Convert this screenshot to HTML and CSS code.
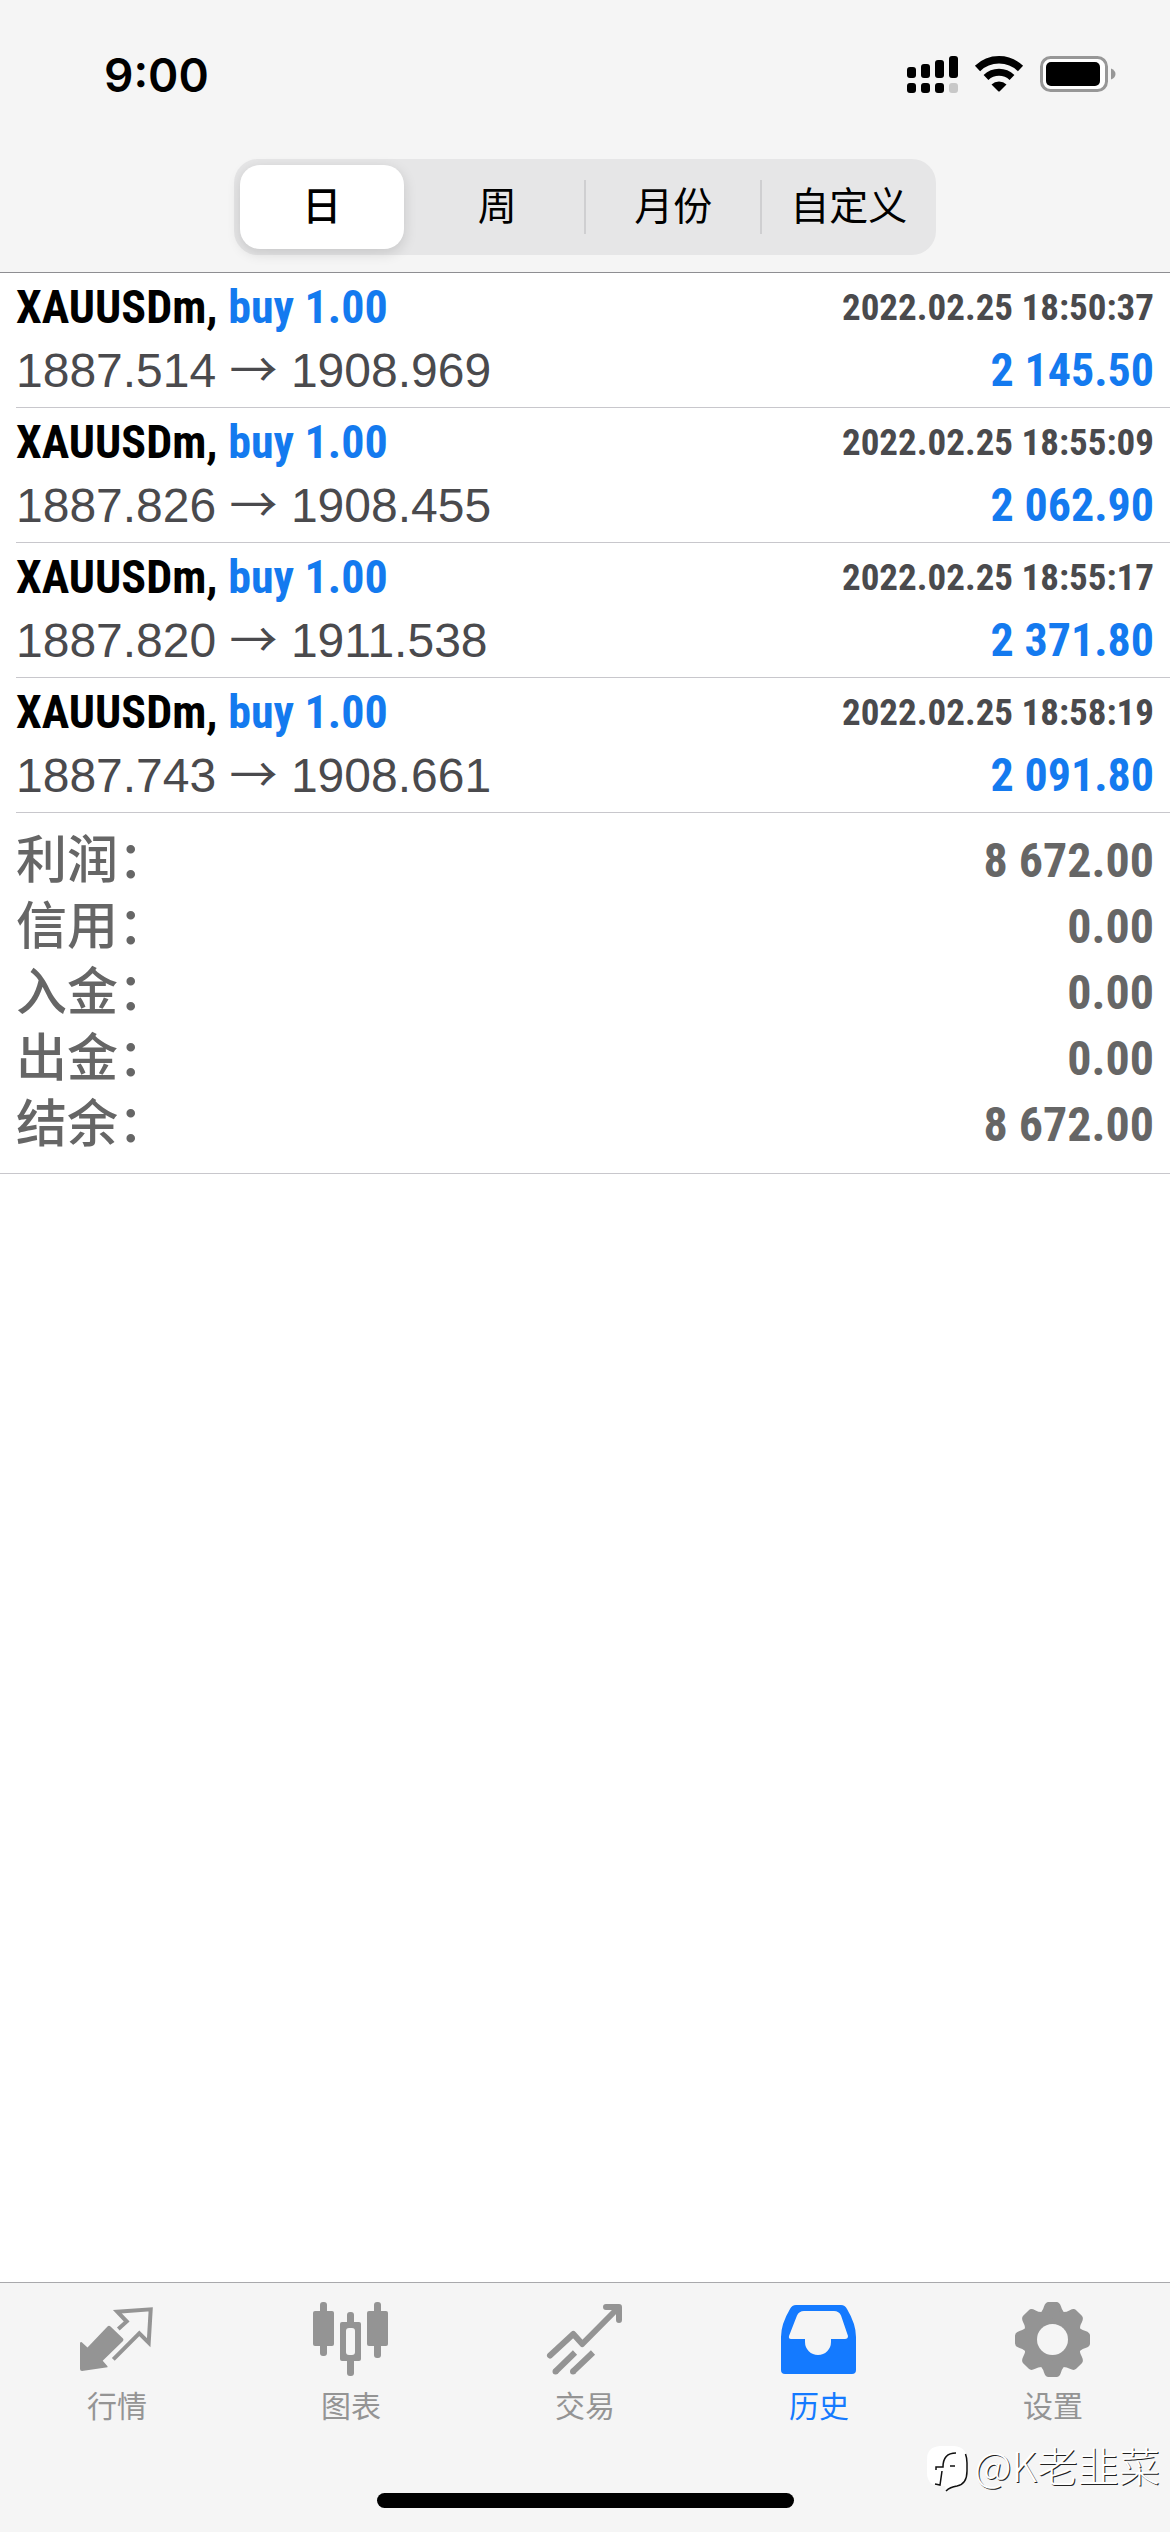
FILE: index.html
```html
<!DOCTYPE html>
<html lang="zh-CN">
<head>
    <meta charset="UTF-8">
    <meta name="viewport" content="width=device-width, initial-scale=1.0">
    <title>历史</title>
    <link rel="stylesheet" href="styles.css">
</head>
<body>
    <header class="header">
        <div class="status-bar">
            <time class="clock">9:00</time>
            <div class="status-icons">
                <svg width="51" height="38" viewBox="0 0 51 38" aria-hidden="true">
                    <rect x="0" y="11" width="9" height="11" rx="3"/>
                    <rect x="14" y="8" width="9" height="14" rx="3"/>
                    <rect x="28" y="4" width="9" height="18" rx="3"/>
                    <rect x="42" y="0" width="9" height="22" rx="3"/>
                    <rect x="0" y="27" width="9" height="10" rx="3"/>
                    <rect x="14" y="27" width="9" height="10" rx="3"/>
                    <rect x="28" y="27" width="9" height="10" rx="3"/>
                    <rect x="42" y="27" width="9" height="10" rx="3" fill="#c8c8c8"/>
                </svg>
                <svg width="50" height="38" viewBox="0 0 50 38" aria-hidden="true">
                    <path d="M3.5 12.5a31 31 0 0 1 43 0" fill="none" stroke="#000" stroke-width="7.5"/>
                    <path d="M12 21.500a19 19 0 0 1 26 0" fill="none" stroke="#000" stroke-width="7"/>
                    <path d="M17.500 28.500a11 11 0 0 1 15 0L26 35q-1 1-2 0z"/>
                </svg>
                <svg width="76" height="38" viewBox="0 0 76 38" aria-hidden="true">
                    <rect x="1.500" y="1.500" width="65" height="33" rx="9" fill="#fff" stroke="#979797" stroke-width="3"/>
                    <rect x="6" y="6" width="54" height="24" rx="5"/>
                    <path d="M71 12.500q4.500 2 4.500 5.500t-4.500 5.500z" fill="#979797"/>
                </svg>
            </div>
        </div>

        <div class="segments" role="radiogroup" aria-label="时间段">
            <label class="segment"><input type="radio" name="period" checked><span>日</span></label>
            <label class="segment"><input type="radio" name="period"><span>周</span></label>
            <label class="segment"><input type="radio" name="period"><span>月份</span></label>
            <label class="segment"><input type="radio" name="period"><span>自定义</span></label>
        </div>
    </header>

    <main class="history">
        <ul class="deals">
            <li class="deal">
                <div class="deal-row">
                    <strong class="symbol">XAUUSDm, <span class="side">buy 1.00</span></strong>
                    <time class="date">2022.02.25 18:50:37</time>
                </div>
                <div class="deal-row">
                    <span class="prices">1887.514 <span class="arrow">→</span> 1908.969</span>
                    <strong class="profit">2 145.50</strong>
                </div>
            </li>
            <li class="deal">
                <div class="deal-row">
                    <strong class="symbol">XAUUSDm, <span class="side">buy 1.00</span></strong>
                    <time class="date">2022.02.25 18:55:09</time>
                </div>
                <div class="deal-row">
                    <span class="prices">1887.826 <span class="arrow">→</span> 1908.455</span>
                    <strong class="profit">2 062.90</strong>
                </div>
            </li>
            <li class="deal">
                <div class="deal-row">
                    <strong class="symbol">XAUUSDm, <span class="side">buy 1.00</span></strong>
                    <time class="date">2022.02.25 18:55:17</time>
                </div>
                <div class="deal-row">
                    <span class="prices">1887.820 <span class="arrow">→</span> 1911.538</span>
                    <strong class="profit">2 371.80</strong>
                </div>
            </li>
            <li class="deal">
                <div class="deal-row">
                    <strong class="symbol">XAUUSDm, <span class="side">buy 1.00</span></strong>
                    <time class="date">2022.02.25 18:58:19</time>
                </div>
                <div class="deal-row">
                    <span class="prices">1887.743 <span class="arrow">→</span> 1908.661</span>
                    <strong class="profit">2 091.80</strong>
                </div>
            </li>
        </ul>

        <dl class="summary">
            <div class="summary-row"><dt>利润：</dt><dd>8 672.00</dd></div>
            <div class="summary-row"><dt>信用：</dt><dd>0.00</dd></div>
            <div class="summary-row"><dt>入金：</dt><dd>0.00</dd></div>
            <div class="summary-row"><dt>出金：</dt><dd>0.00</dd></div>
            <div class="summary-row"><dt>结余：</dt><dd>8 672.00</dd></div>
        </dl>
    </main>

    <footer class="footer">
        <nav class="tabs">
            <a class="tab" href="#quotes">
                <svg viewBox="0 0 84 84" aria-hidden="true">
                    <path d="M5 44.500l1.500-.5 6 5.500L32.500 28.500q1.500-1.500 3 0L48 40.500q1 1.200 0 2.500L27.700 62.700l4.800 5.500v1L7 73q-2 0-2-2z" fill="currentColor"/>
                    <path d="M43.300 31l8.400-7.500-9.400-9.800 33.400-2.400-2 33.400-9.400-9.400-26 26" fill="none" stroke="currentColor" stroke-width="4"/>
                </svg>
                <span>行情</span>
            </a>
            <a class="tab" href="#charts">
                <svg viewBox="0 0 84 84" fill="currentColor" aria-hidden="true">
                    <rect x="4" y="13" width="21" height="35" rx="2"/>
                    <rect x="11" y="4" width="7" height="54" rx="3"/>
                    <rect x="38" y="14" width="7" height="64" rx="3"/>
                    <rect x="31" y="24" width="21" height="39" rx="2"/>
                    <rect x="37" y="30" width="9" height="27" rx="3" fill="#f5f5f5"/>
                    <rect x="58" y="13" width="21" height="35" rx="2"/>
                    <rect x="65" y="4" width="7" height="56" rx="3"/>
                </svg>
                <span>图表</span>
            </a>
            <a class="tab" href="#trade">
                <svg viewBox="0 0 84 84" fill="none" stroke="currentColor" stroke-width="6" aria-hidden="true">
                    <path d="M7 57.500L30.300 36l9 10L75 10M63 9h13v13" stroke-linecap="round" stroke-linejoin="round"/>
                    <path d="M12.500 73.500l19.500-19M30 73.500l20-19"/>
                    <path d="M12.500 73.500h.1M30 73.500h.1" stroke-linecap="round"/>
                </svg>
                <span>交易</span>
            </a>
            <a class="tab active" href="#history">
                <svg viewBox="0 0 84 84" fill="currentColor" fill-rule="evenodd" aria-hidden="true">
                    <path d="M19 7h45q4 0 6 4 9 15 9 28v33q0 4-4 4H8q-4 0-4-4V39q0-13 9-28 2-4 6-4zM27 13q-5 0-7 4.500L12 38q-.6 3 2 3h14v3a13 13 0 0 0 26 0v-3h14q3 0 3-3L64 17.500Q62 13 57 13z"/>
                </svg>
                <span>历史</span>
            </a>
            <a class="tab" href="#settings">
                <svg viewBox="0 0 84 84" fill="currentColor" aria-hidden="true">
                    <defs>
                        <path id="tooth" d="M-15-25Q-10-27-8.500-33-7-37.500-4-37.500H4Q7-37.500 8.500-33 10-27 15-25V0H-15z"/>
                    </defs>
                    <g transform="translate(41.500 41.500)">
                        <use href="#tooth"/>
                        <use href="#tooth" transform="rotate(45)"/>
                        <use href="#tooth" transform="rotate(90)"/>
                        <use href="#tooth" transform="rotate(135)"/>
                        <use href="#tooth" transform="rotate(180)"/>
                        <use href="#tooth" transform="rotate(225)"/>
                        <use href="#tooth" transform="rotate(270)"/>
                        <use href="#tooth" transform="rotate(315)"/>
                        <circle r="15.500" fill="#f5f5f5"/>
                    </g>
                </svg>
                <span>设置</span>
            </a>
        </nav>
        <div class="home-indicator"></div>
        <div class="watermark">
            <svg width="42" height="48" viewBox="0 0 42 48" aria-hidden="true">
                <path d="M14 2h14q13 1 13 14v12q0 12-11 14-5 1-10 5l-1-5h-6Q1 41 1 29V15Q1 3 14 2z" fill="#fff"/>
                <path d="M39.500 10q1.500 4 1.500 9v8q0 13-10 15-7 1-11 5M10 26v-3h7q0-14 13-14M24 22h5M16 27l-2 14-5-1" fill="none" stroke="#111" stroke-width="1.500"/>
            </svg>
            <span>@K老韭菜</span>
        </div>
    </footer>
</body>
</html>
```

FILE: styles.css
```css
* {
    box-sizing: border-box;
}
body {
    font-family: "Liberation Sans", "Noto Sans CJK SC", sans-serif;
    margin: 0;
    min-height: 100vh;
    display: flex;
    flex-direction: column;
    background-color: #fff;
    color: #000;
}

/* Header */
.header {
    background-color: #f5f5f5;
    border-bottom: 1px solid #8e8e92;
    padding-bottom: 17px;
}
.status-bar {
    display: flex;
    justify-content: space-between;
    align-items: center;
    padding: 44px 54px 53px 104px;
}
.clock {
    font-family: Inter, sans-serif;
    font-size: 46px;
    font-weight: 600;
    line-height: 62px;
}
.status-icons {
    display: flex;
    gap: 16px;
}
.segments {
    display: flex;
    width: 60%;
    margin: 0 auto;
    padding: 6px 0;
    border-radius: 24px;
    background-color: #e6e6e7;
}
.segment {
    position: relative;
    flex: 1;
    display: flex;
    cursor: pointer;
}
.segment input {
    position: absolute;
    opacity: 0;
}
.segment span {
    flex: 1;
    margin: 0 6px;
    border-radius: 20px;
    font-size: 39px;
    line-height: 84px;
    text-align: center;
}
.segment input:checked + span {
    background-color: #fff;
    font-weight: 500;
    box-shadow: 0 4px 14px rgba(0, 0, 0, 0.14);
}
.segment:nth-child(n+3)::before {
    content: "";
    width: 2px;
    height: 54px;
    margin: 15px 0 0 -1px;
    background-color: #cfcfd1;
}

/* Deals */
.history {
    flex: 1;
}
.deals {
    list-style: none;
    margin: 0;
    padding: 0 0 0 16px;
}
.deal {
    padding: 3px 16px 5px 0;
    border-bottom: 1px solid #c8c7cc;
}
.deal-row {
    display: flex;
    justify-content: space-between;
    align-items: center;
    line-height: 63px;
}
.symbol, .date, .profit, .summary dd {
    font-family: "Roboto Condensed", "Liberation Sans", sans-serif;
    font-weight: 700;
}
.symbol, .profit {
    font-size: 46px;
}
.side, .profit {
    color: #147aef;
}
.date {
    font-size: 37px;
    color: #4a4a4d;
}
.prices {
    font-size: 48px;
    color: #4a4a4d;
}
.arrow {
    font-family: "Noto Sans CJK SC", sans-serif;
    line-height: 1;
}

/* Totals */
.summary {
    margin: 0;
    padding: 15px 16px;
    border-bottom: 1px solid #c8c7cc;
    color: #666;
}
.summary-row {
    display: flex;
    justify-content: space-between;
    line-height: 66px;
}
.summary dt {
    font-size: 51px;
    font-weight: 500;
}
.summary dd {
    margin: 0;
    font-size: 48px;
}

/* Tab bar */
.footer {
    position: relative;
    padding: 15px 0 24px;
    background-color: #f5f5f5;
    border-top: 1px solid #a9a9ac;
}
.tabs {
    display: flex;
}
.tab {
    flex: 1;
    display: flex;
    flex-direction: column;
    align-items: center;
    color: #949494;
    font-size: 30px;
    line-height: 50px;
    text-decoration: none;
}
.tab svg {
    width: 84px;
    height: 84px;
}
.tab.active {
    color: #147aff;
}
.home-indicator {
    width: 417px;
    height: 15px;
    margin: 61px auto 0;
    border-radius: 8px;
    background-color: #000;
}
.watermark {
    position: absolute;
    right: 10px;
    bottom: 40px;
    display: flex;
    gap: 6px;
    color: #fff;
    font-family: "Noto Sans CJK SC", sans-serif;
    font-size: 41px;
    font-weight: 300;
    line-height: 40px;
    text-shadow: 1px 1px 0 #222;
}
```
